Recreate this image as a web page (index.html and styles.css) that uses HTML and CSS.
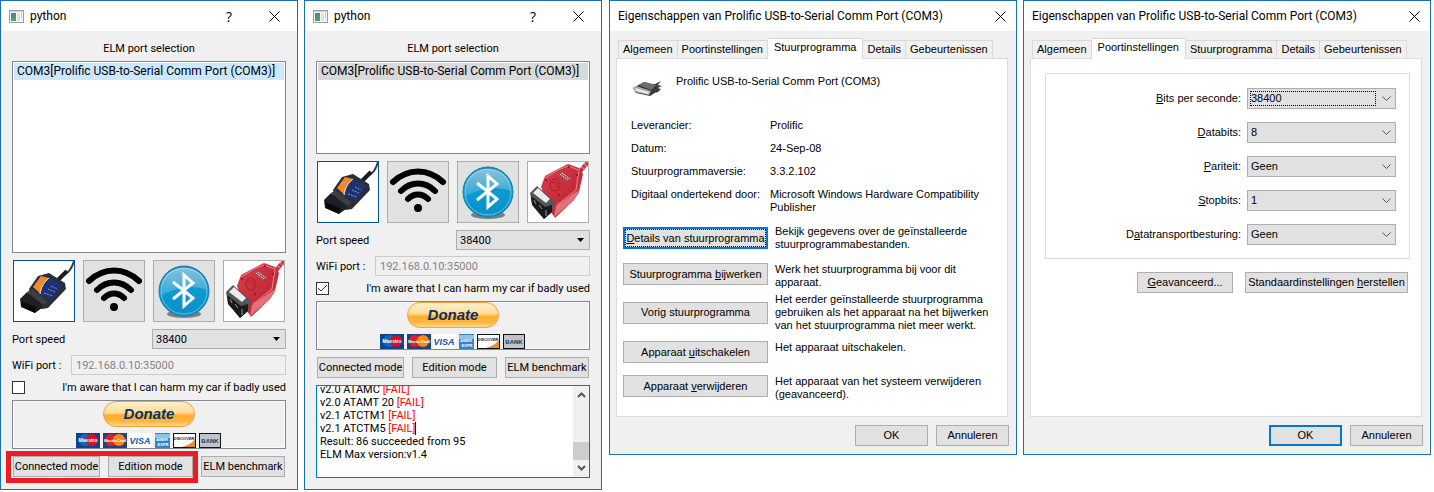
FILE: index.html
```html
<!DOCTYPE html>
<html lang="nl">
<head>
  <meta charset="UTF-8">
  <meta name="viewport" content="width=device-width, initial-scale=1.0">
  <title>ELM port selection</title>
  <link rel="stylesheet" href="styles.css">
</head>
<body>

  <!-- Shared icons -->
  <svg class="sprite" aria-hidden="true">
    <defs>
      <linearGradient id="appGrad" x1="0" y1="0" x2="0" y2="1">
        <stop offset="0" stop-color="#4a7fa8"/><stop offset="1" stop-color="#4fa36a"/>
      </linearGradient>
      <linearGradient id="btGrad" x1="0" y1="0" x2="0" y2="1">
        <stop offset="0" stop-color="#1583b0"/><stop offset=".5" stop-color="#0c9bd2"/><stop offset="1" stop-color="#0d8ec4"/>
      </linearGradient>
      <linearGradient id="btGloss" x1="0" y1="0" x2="0" y2="1">
        <stop offset="0" stop-color="#fff" stop-opacity=".5"/><stop offset="1" stop-color="#fff" stop-opacity=".12"/>
      </linearGradient>
      <linearGradient id="redGrad" x1="0" y1="0" x2="1" y2="1">
        <stop offset="0" stop-color="#d8404c"/><stop offset=".6" stop-color="#c42a38"/><stop offset="1" stop-color="#dc5460"/>
      </linearGradient>
    </defs>

    <symbol id="i-app" viewBox="0 0 15 13">
      <rect x=".5" y=".5" width="14" height="12" fill="#f4f4f4" stroke="#9a9fa3"/>
      <rect x="1" y="1" width="13" height="1" fill="#c4d0dc"/>
      <rect x="2" y="3" width="5" height="8" fill="url(#appGrad)"/>
      <rect x="8" y="3" width="3" height="8" fill="#dfe3e6"/>
      <rect x="12" y="3" width="1" height="5" fill="#b9d8c0"/>
    </symbol>

    <symbol id="i-close" viewBox="0 0 11 11">
      <path d="M.5 .5L10.500 10.500M10.500 .5L.5 10.500" stroke="#000" fill="none"/>
    </symbol>

    <symbol id="i-usb" viewBox="0 0 60 60">
      <path d="M60 0C58 7 56 11 51 13L46 18" stroke="#3a3c42" stroke-width="2" fill="none"/>
      <path d="M53 10L44 19" stroke="#1b1c20" stroke-width="4" fill="none"/>
      <path d="M24 15L35 12L51 22L52 28L34 47L28 48L17 39L15 28Z" fill="#2b2e35"/>
      <path d="M6 38L13 31L29 43L28 47L21 52L7 46Z" fill="#1d1f24"/>
      <path d="M13 31L18 28L34 41L29 44Z" fill="#3a3e46"/>
      <path d="M7 40L22 46L21 52L8 46Z" fill="#08090b"/>
      <path d="M19 26L27 15L35 17L28 34Z" fill="#f58a25"/>
      <path d="M26 33L29 23L35 17L49 24L38 39Z" fill="#1d3272"/>
      <path d="M26 33C27 26 30 21 35 17" stroke="#f3e6d3" stroke-width="1" fill="none"/>
      <path d="M24 20L30 21M37 25L43 28M34 28L41 31M30 32L39 35" stroke="#8f9ac6" stroke-width="1" stroke-dasharray="2 1"/>
    </symbol>

    <symbol id="i-wifi" viewBox="0 0 60 60">
      <g fill="none" stroke="#000" stroke-width="6" stroke-linecap="round">
        <path d="M5 20C20 6 40 6 55 20"/>
        <path d="M13 29C23 19 37 19 47 29"/>
        <path d="M20 37C26 31 34 31 40 37"/>
      </g>
      <circle cx="30" cy="46" r="4" fill="#000"/>
    </symbol>

    <symbol id="i-bt" viewBox="0 0 60 60">
      <ellipse cx="30" cy="53" rx="17" ry="4" fill="#555" opacity=".7"/>
      <circle cx="30" cy="30" r="25" fill="url(#btGrad)" stroke="#1780ab"/>
      <circle cx="30" cy="30" r="23" fill="none" stroke="#5cc4ea"/>
      <path d="M7 29C7 15 17 7 30 7S53 15 53 29C40 24 23 25 7 35Z" fill="url(#btGloss)"/>
      <path d="M19 21L39 37L30 45V14L39 22L19 38" fill="none" stroke="#fff" stroke-width="3"/>
    </symbol>

    <symbol id="i-red" viewBox="0 0 60 60">
      <path d="M51 11C54 8 55 4 60 1" stroke="#c83845" stroke-width="4" fill="none"/>
      <path d="M53 4L57 8M56 1L59 5" stroke="#ef9da3" stroke-width="1"/>
      <path d="M17 14L30 7L40 2L51 6L55 12L51 30L46 38L27 56L21 47L13 25Z" fill="url(#redGrad)"/>
      <path d="M28 44L51 28L46 38L26 55Z" fill="#e3717a"/>
      <path d="M17 16L30 8L40 4L51 8L48 28L29 43" fill="none" stroke="#e9868e" stroke-width="1"/>
      <path d="M2 31L9 24L27 40L24 50L16 57L4 42Z" fill="#55565a"/>
      <path d="M3 34L17 45L24 43L24 50L16 57L4 43Z" fill="#1a1a1c"/>
      <path d="M5 31L10 26L22 37L18 41Z" fill="#ececec"/>
      <path d="M6 38L8 42M11 43L14 47M18 48V54" stroke="#999" stroke-width="1"/>
      <path d="M30 12L34 10L43 17L39 20Z" fill="#9b5158"/>
      <path d="M32 12L40 18M34 11L42 17" stroke="#f3dede" stroke-width="1" stroke-dasharray="2 1"/>
      <ellipse cx="27" cy="23" rx="5" ry="6" fill="none" stroke="#a91d2c" stroke-width="1"/>
      <path d="M24 21C28 19 30 21 29 26" fill="none" stroke="#a91d2c"/>
      <g fill="#96101e">
        <circle cx="18" cy="18" r="1"/><circle cx="41" cy="5" r="1"/><circle cx="49" cy="13" r="1"/><circle cx="31" cy="33" r="1"/>
      </g>
    </symbol>

    <symbol id="i-cards" viewBox="0 0 146 15">
      <rect width="24" height="15" fill="#0a4690"/>
      <circle cx="9" cy="7" r="6" fill="#1269b8"/><circle cx="16" cy="7" r="6" fill="#d21224"/>
      <text x="12" y="9" class="card-text" fill="#fff">Maestro</text>

      <rect x="27" width="24" height="15" fill="#25407c"/>
      <circle cx="35" cy="7" r="6" fill="#d8232a"/><circle cx="43" cy="7" r="6" fill="#f28b1c"/>
      <text x="39" y="9" class="card-small" fill="#fff">MasterCard</text>

      <rect x="53" width="23" height="15" fill="#fff"/>
      <text x="64" y="11" class="card-visa" fill="#0b5ba4">VISA</text>

      <rect x="79" width="15" height="15" fill="#2c86c8"/>
      <rect x="79" y="1" width="15" height="4" fill="#8cc4e8"/>
      <text x="86" y="8" class="card-small" fill="#fff">AMER</text>
      <text x="87" y="13" class="card-small" fill="#fff">EXPR</text>

      <rect x="97" y="0" width="23" height="15" fill="#111"/>
      <rect x="98" y="1" width="21" height="13" fill="#fff"/>
      <path d="M119 6V14H105C111 13 116 10 119 6Z" fill="#f08a2a"/>
      <text x="108" y="7" class="card-small" fill="#222">DISCOVER</text>

      <rect x="123" y="0" width="22" height="15" fill="#111"/>
      <rect x="124" y="1" width="20" height="13" fill="#bfc4c8"/>
      <text x="134" y="10" class="card-bank" fill="#123a6b">BANK</text>
    </symbol>

    <symbol id="i-port" viewBox="0 0 30 18">
      <path d="M18 4L23 4L29 1L26 5L30 6L26 8L29 9L25 13Z" fill="#444"/>
      <path d="M1 8L12 2L24 5L26 11L18 16L4 13Z" fill="#3a3a3a"/>
      <path d="M7 5L13 2L24 5L19 10Z" fill="#6f6f6f"/>
      <path d="M1 8L4 6L19 11L17 15L3 12Z" fill="#a9a9a9"/>
      <path d="M3 8L17 12L16 14L4 11Z" fill="#e9e9e9"/>
    </symbol>
  </svg>

  <main class="desktop">

    <div class="pair pair-elm">

      <!-- ===== ELM window, before benchmark ===== -->
      <section class="window">
        <header class="titlebar">
          <svg class="app-icon"><use href="#i-app"/></svg>
          <h2>python</h2>
          <button class="help" aria-label="Help">?</button>
          <button class="close" aria-label="Close"><svg><use href="#i-close"/></svg></button>
        </header>
        <div class="elm">
          <h3>ELM port selection</h3>
          <ul class="ports tall">
            <li class="active">COM3[Prolific USB-to-Serial Comm Port (COM3)]</li>
          </ul>
          <div class="devices">
            <button class="device selected" aria-label="USB adapter"><svg><use href="#i-usb"/></svg></button>
            <button class="device" aria-label="WiFi adapter"><svg><use href="#i-wifi"/></svg></button>
            <button class="device" aria-label="Bluetooth adapter"><svg><use href="#i-bt"/></svg></button>
            <button class="device plain" aria-label="OBDLink adapter"><svg><use href="#i-red"/></svg></button>
          </div>
          <div class="field">
            <label for="speed1">Port speed</label>
            <select id="speed1" class="speed"><option>38400</option></select>
          </div>
          <div class="field">
            <label for="wifi1">WiFi port :</label>
            <input id="wifi1" class="wifi" type="text" value="192.168.0.10:35000" disabled>
          </div>
          <div class="aware">
            <input id="aware1" type="checkbox">
            <label for="aware1">I'm aware that I can harm my car if badly used</label>
          </div>
          <div class="donate-box">
            <button class="donate">Donate</button>
            <svg class="cards"><use href="#i-cards"/></svg>
          </div>
          <div class="modes">
            <button>Connected mode</button>
            <button>Edition mode</button>
            <button>ELM benchmark</button>
            <span class="highlight"></span>
          </div>
        </div>
      </section>

      <!-- ===== ELM window, after benchmark ===== -->
      <section class="window">
        <header class="titlebar">
          <svg class="app-icon"><use href="#i-app"/></svg>
          <h2>python</h2>
          <button class="help" aria-label="Help">?</button>
          <button class="close" aria-label="Close"><svg><use href="#i-close"/></svg></button>
        </header>
        <div class="elm">
          <h3>ELM port selection</h3>
          <ul class="ports">
            <li>COM3[Prolific USB-to-Serial Comm Port (COM3)]</li>
          </ul>
          <div class="devices">
            <button class="device selected" aria-label="USB adapter"><svg><use href="#i-usb"/></svg></button>
            <button class="device" aria-label="WiFi adapter"><svg><use href="#i-wifi"/></svg></button>
            <button class="device" aria-label="Bluetooth adapter"><svg><use href="#i-bt"/></svg></button>
            <button class="device plain" aria-label="OBDLink adapter"><svg><use href="#i-red"/></svg></button>
          </div>
          <div class="field">
            <label for="speed2">Port speed</label>
            <select id="speed2" class="speed"><option>38400</option></select>
          </div>
          <div class="field">
            <label for="wifi2">WiFi port :</label>
            <input id="wifi2" class="wifi" type="text" value="192.168.0.10:35000" disabled>
          </div>
          <div class="aware">
            <input id="aware2" type="checkbox" checked>
            <label for="aware2">I'm aware that I can harm my car if badly used</label>
          </div>
          <div class="donate-box">
            <button class="donate">Donate</button>
            <svg class="cards"><use href="#i-cards"/></svg>
          </div>
          <div class="modes">
            <button>Connected mode</button>
            <button>Edition mode</button>
            <button>ELM benchmark</button>
          </div>
          <div class="log">
            <div class="log-text">
              <p>v2.0 ATAMC <span class="fail">[FAIL]</span></p>
              <p>v2.0 ATAMT 20 <span class="fail">[FAIL]</span></p>
              <p>v2.1 ATCTM1 <span class="fail">[FAIL]</span></p>
              <p>v2.1 ATCTM5 <span class="fail caret">[FAIL]</span></p>
              <p>Result: 86 succeeded from 95</p>
              <p>ELM Max version:v1.4</p>
            </div>
            <div class="scrollbar">
              <svg viewBox="0 0 9 6"><path d="M1 5L4.500 1.500L8 5" fill="none" stroke="#555" stroke-width="2"/></svg>
              <span class="thumb"></span>
              <svg viewBox="0 0 9 6"><path d="M1 1L4.500 4.500L8 1" fill="none" stroke="#555" stroke-width="2"/></svg>
            </div>
          </div>
        </div>
      </section>
    </div>

    <div class="pair">

      <!-- ===== Driver tab ===== -->
      <section class="window props">
        <header class="titlebar">
          <h2>Eigenschappen van Prolific USB-to-Serial Comm Port (COM3)</h2>
          <button class="close" aria-label="Sluiten"><svg><use href="#i-close"/></svg></button>
        </header>
        <nav class="tabs">
          <button>Algemeen</button>
          <button>Poortinstellingen</button>
          <button class="current">Stuurprogramma</button>
          <button>Details</button>
          <button>Gebeurtenissen</button>
        </nav>
        <div class="panel driver">
          <div class="device-name">
            <svg><use href="#i-port"/></svg>
            <span>Prolific USB-to-Serial Comm Port (COM3)</span>
          </div>
          <dl>
            <dt>Leverancier:</dt><dd>Prolific</dd>
            <dt>Datum:</dt><dd>24-Sep-08</dd>
            <dt>Stuurprogrammaversie:</dt><dd>3.3.2.102</dd>
            <dt>Digitaal ondertekend door:</dt><dd>Microsoft Windows Hardware Compatibility<br>Publisher</dd>
          </dl>
          <div class="actions">
            <div class="action middle">
              <button class="focused"><span><u>D</u>etails van stuurprogramma</span></button>
              <p>Bekijk gegevens over de geïnstalleerde<br>stuurprogrammabestanden.</p>
            </div>
            <div class="action">
              <button><span>Stuurprogramma <u>b</u>ijwerken</span></button>
              <p>Werk het stuurprogramma bij voor dit<br>apparaat.</p>
            </div>
            <div class="action middle tight">
              <button><span>Vorig stuurprogramma</span></button>
              <p>Het eerder geïnstalleerde stuurprogramma<br>gebruiken als het apparaat na het bijwerken<br>van het stuurprogramma niet meer werkt.</p>
            </div>
            <div class="action">
              <button><span>Apparaat <u>u</u>itschakelen</span></button>
              <p>Het apparaat uitschakelen.</p>
            </div>
            <div class="action">
              <button><span>Apparaat <u>v</u>erwijderen</span></button>
              <p>Het apparaat van het systeem verwijderen<br>(geavanceerd).</p>
            </div>
          </div>
        </div>
        <footer>
          <button>OK</button>
          <button>Annuleren</button>
        </footer>
      </section>

      <!-- ===== Port settings tab ===== -->
      <section class="window props">
        <header class="titlebar">
          <h2>Eigenschappen van Prolific USB-to-Serial Comm Port (COM3)</h2>
          <button class="close" aria-label="Sluiten"><svg><use href="#i-close"/></svg></button>
        </header>
        <nav class="tabs">
          <button>Algemeen</button>
          <button class="current">Poortinstellingen</button>
          <button>Stuurprogramma</button>
          <button>Details</button>
          <button>Gebeurtenissen</button>
        </nav>
        <div class="panel port">
          <div class="settings">
            <label for="bps"><u>B</u>its per seconde:</label>
            <span class="select-wrap focus"><select id="bps"><option>38400</option></select></span>
            <label for="databits"><u>D</u>atabits:</label>
            <span class="select-wrap"><select id="databits"><option>8</option></select></span>
            <label for="parity"><u>P</u>ariteit:</label>
            <span class="select-wrap"><select id="parity"><option>Geen</option></select></span>
            <label for="stopbits"><u>S</u>topbits:</label>
            <span class="select-wrap"><select id="stopbits"><option>1</option></select></span>
            <label for="flow">D<u>a</u>tatransportbesturing:</label>
            <span class="select-wrap"><select id="flow"><option>Geen</option></select></span>
          </div>
          <div class="port-buttons">
            <button class="advanced"><span><u>G</u>eavanceerd...</span></button>
            <button class="restore"><span>Standaardinstellingen <u>h</u>erstellen</span></button>
          </div>
        </div>
        <footer>
          <button class="default">OK</button>
          <button>Annuleren</button>
        </footer>
      </section>
    </div>

  </main>
</body>
</html>
```

FILE: styles.css
```css
* {
  box-sizing: border-box;
}

body {
  margin: 0;
  background: #fff;
  color: #000;
  font-family: Roboto, "Open Sans", sans-serif;
  font-size: 11px;
  line-height: 13px;
}

h2, h3, p, ul, dl, dd {
  margin: 0;
  padding: 0;
  font-weight: normal;
}

button, input, select {
  margin: 0;
  padding: 0;
  color: inherit;
  font: inherit;
  border-radius: 0;
}

button {
  background: #e1e1e1;
  border: 1px solid #adadad;
  white-space: nowrap;
}

select {
  appearance: none;
  background: #e1e1e1 no-repeat right 7px center;
  border: 1px solid #adadad;
}

svg {
  display: block;
}

.sprite {
  position: absolute;
  width: 0;
  height: 0;
}

/* ====== WINDOWS ====== */
.desktop {
  display: flex;
  gap: 7px;
  padding-right: 3px;
}

.pair {
  flex: 822;
  min-width: 0;
  display: grid;
  grid-template-columns: minmax(0, 1fr) minmax(0, 1fr);
  align-items: start;
  gap: 6px;
}

.pair-elm {
  flex: 602;
}

.window {
  background: #f0f0f0;
  border: 1px solid #1a6fb5;
}

.titlebar {
  display: flex;
  align-items: center;
  height: 30px;
  padding: 0 10px 0 8px;
  background: #fff;
}

.titlebar h2 {
  flex: 1;
  font-family: Roboto, "Open Sans", sans-serif;
  font-size: 12px;
  line-height: 16px;
  white-space: nowrap;
}

.titlebar button {
  background: none;
  border: 0;
}

.app-icon {
  width: 15px;
  height: 13px;
  margin-right: 6px;
}

.help {
  width: 14px;
  margin-right: 33px;
  font-family: "Open Sans", sans-serif;
  font-size: 14px;
}

.close svg {
  width: 11px;
  height: 11px;
}

.pair-elm .close {
  margin-right: 7px;
}

/* ====== ELM WINDOW ====== */
.elm {
  display: flex;
  flex-direction: column;
  gap: 6px;
  padding: 11px;
}

.elm h3 {
  font-size: 11px;
  line-height: 13px;
  text-align: center;
}

.ports {
  height: 93px;
  padding: 1px;
  background: #fff;
  border: 1px solid #828790;
  list-style: none;
}

.ports.tall {
  height: 192px;
}

.ports li {
  padding-left: 3px;
  background: #d9d9d9;
  font-size: 12px;
  line-height: 17px;
  white-space: nowrap;
}

.ports li.active {
  background: #cce8ff;
}

.devices {
  display: flex;
  justify-content: space-between;
  padding: 1px;
}

.device {
  width: 62px;
  height: 62px;
}

.device svg {
  width: 60px;
  height: 60px;
}

.device.selected {
  background: #fff;
  border-color: #00549a;
}

.device.plain {
  background: #fff;
}

.field {
  display: flex;
  align-items: center;
  justify-content: space-between;
}

.speed {
  width: 134px;
  height: 20px;
  padding-left: 3px;
  background-image: url("data:image/svg+xml,%3Csvg xmlns='http://www.w3.org/2000/svg' width='7' height='4'%3E%3Cpath d='M0 0H7L3.500 4Z'/%3E%3C/svg%3E");
  background-position: right 5px center;
}

.wifi {
  width: 215px;
  height: 20px;
  padding-left: 4px;
  background: #f0f0f0;
  border: 1px solid #ccc;
  color: #838383;
}

.aware {
  display: flex;
  justify-content: space-between;
  white-space: nowrap;
}

.aware input {
  appearance: none;
  width: 13px;
  height: 13px;
  background: #fff;
  border: 1px solid #333;
}

.aware input:checked {
  background: #fff url("data:image/svg+xml,%3Csvg xmlns='http://www.w3.org/2000/svg' width='11' height='11'%3E%3Cpath d='M1 5L4 8L10 2' fill='none' stroke='%23333'/%3E%3C/svg%3E");
}

.donate-box {
  display: flex;
  flex-direction: column;
  align-items: center;
  justify-content: space-between;
  height: 49px;
  border: 1px solid #828790;
  box-shadow: inset 0 0 0 1px #fafafa;
}

.donate {
  width: 92px;
  height: 26px;
  border: 1px solid #f5a13a;
  border-radius: 13px;
  background: linear-gradient(#fff0cc, #ffdc94 45%, #ffaf32 55%, #ffb53f 80%, #ffd995);
  color: #036;
  font: italic bold 15px/18px "Liberation Sans", Arial, sans-serif;
}

.cards {
  width: 146px;
  height: 15px;
}

.card-text {
  font: bold 5px "Liberation Sans", sans-serif;
  text-anchor: middle;
}

.card-small {
  font: bold 4px "Liberation Sans", sans-serif;
  text-anchor: middle;
}

.card-visa {
  font: italic bold 9px "Liberation Sans", sans-serif;
  text-anchor: middle;
}

.card-bank {
  font: bold 6px "Liberation Sans", sans-serif;
  text-anchor: middle;
}

.modes {
  position: relative;
  display: grid;
  grid-template-columns: minmax(0, 87fr) minmax(0, 85fr) minmax(0, 84fr);
  gap: 8px;
  padding: 1px;
}

.modes button {
  height: 21px;
}

/* Marks the two buttons to use */
.highlight {
  position: absolute;
  top: -4px;
  left: -6px;
  width: 192px;
  height: 32px;
  border: 5px solid #ed1c24;
}

.log {
  display: flex;
  height: 93px;
  background: #fff;
  border: 1px solid #0078d7;
}

.log-text {
  flex: 1;
  display: flex;
  flex-direction: column;
  justify-content: flex-end;
  padding: 0 3px 16px;
  overflow: hidden;
  white-space: nowrap;
}

.fail {
  color: #f00;
}

.caret {
  border-right: 1px solid #000;
}

.scrollbar {
  display: flex;
  flex-direction: column;
  align-items: center;
  width: 16px;
  padding: 6px 0;
  background: #f0f0f0;
}

.scrollbar svg {
  width: 9px;
  height: 6px;
}

.thumb {
  width: 100%;
  height: 18px;
  margin-top: auto;
  margin-bottom: 5px;
  background: #cdcdcd;
}

/* ====== PROPERTIES WINDOWS ====== */
.props {
  font-family: "Liberation Sans", Arial, sans-serif;
}

.tabs {
  display: flex;
  align-items: flex-end;
  padding: 7px 8px 0;
}

.tabs button {
  height: 18px;
  padding: 0 4px;
  background: #f0f0f0;
  border: 1px solid #d9d9d9;
  border-width: 1px 1px 0 0;
}

.tabs button:first-child {
  border-left-width: 1px;
}

.tabs .current {
  position: relative;
  height: 21px;
  margin-bottom: -1px;
  padding: 0 6px 3px;
  background: #fff;
}

.panel {
  height: 359px;
  margin: 0 8px 0 6px;
  background: #fff;
  border: 1px solid #dcdcdc;
}

.driver {
  padding: 16px 6px 14px;
}

.device-name {
  display: flex;
  gap: 14px;
  padding-left: 9px;
}

.device-name svg {
  width: 30px;
  height: 18px;
  margin-top: 5px;
}

dl {
  display: grid;
  grid-template-columns: 139px 1fr;
  row-gap: 10px;
  padding: 21px 0 0 8px;
}

.actions {
  padding-top: 11px;
}

.action {
  display: grid;
  grid-template-columns: 145px 1fr;
  align-items: start;
  gap: 7px;
  margin-bottom: 12px;
}

.action.middle {
  align-items: center;
}

.action.tight {
  margin-top: -8px;
  margin-bottom: 9px;
}

.action button {
  height: 22px;
}

.action .focused {
  border: 2px solid #0078d7;
  outline: 1px dotted #000;
  outline-offset: -3px;
}

.props footer {
  display: flex;
  justify-content: flex-end;
  gap: 8px;
  padding: 8px 7px;
}

.props footer button {
  width: 73px;
  height: 21px;
}

.props footer .default {
  border: 2px solid #0078d7;
}

.port {
  padding: 14px 11px 0 14px;
}

.settings {
  display: grid;
  grid-template-columns: 1fr 149px;
  align-items: center;
  gap: 13px 6px;
  padding: 14px 13px 13px;
  border: 1px solid #dcdcdc;
}

.settings label {
  text-align: right;
}

.select-wrap {
  position: relative;
}

.select-wrap select {
  display: block;
  width: 100%;
  height: 21px;
  padding-left: 3px;
  background-image: url("data:image/svg+xml,%3Csvg xmlns='http://www.w3.org/2000/svg' width='9' height='6'%3E%3Cpath d='M.5 .5L4.500 4.500L8.500 .5' fill='none' stroke='%23555'/%3E%3C/svg%3E");
  background-position: right 4px center;
}

.select-wrap.focus::after {
  content: "";
  position: absolute;
  inset: 3px 20px 3px 3px;
  border: 1px dotted #000;
  pointer-events: none;
}

.port-buttons {
  display: flex;
  justify-content: flex-end;
  gap: 12px;
  padding: 13px 2px;
}

.port-buttons button {
  height: 21px;
}

.advanced {
  width: 96px;
}

.restore {
  width: 163px;
}
```
